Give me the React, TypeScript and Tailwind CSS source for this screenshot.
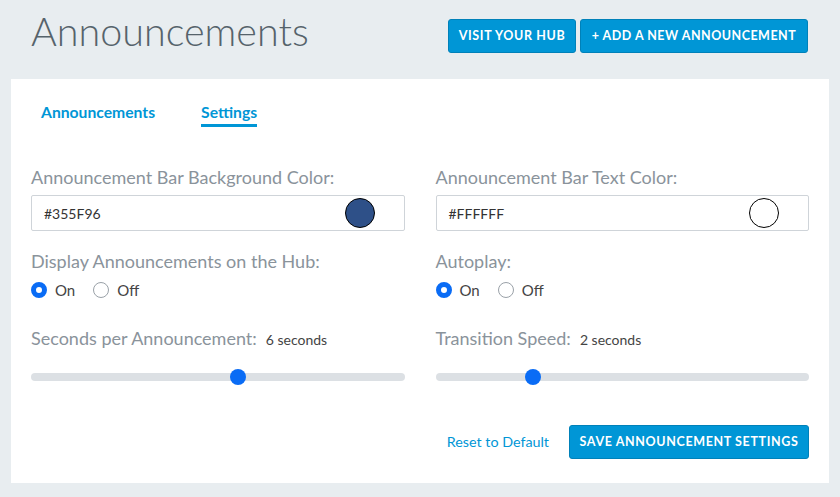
import React from "react"

const font = { fontFamily: "Lato, 'Noto Sans', sans-serif" }

const ColorField = ({ label, value, swatch }: { label: string; value: string; swatch: string }) => (
  <div>
    <div className="text-[18px] leading-[24px] text-[#8a939b]">{label}</div>
    <div className="mt-[6px] flex h-[36px] items-center justify-between rounded-[2px] border border-[#cfd4d9] bg-white pl-[12px] pr-[29px]">
      <span className="pt-[1px] text-[14px] text-[#333]">{value}</span>
      <span className="h-[30px] w-[30px] rounded-full border border-black" style={{ backgroundColor: swatch }} />
    </div>
  </div>
)

const RadioGroup = ({ label }: { label: string }) => (
  <div className="mt-[18px]">
    <div className="text-[18px] leading-[24px] text-[#8a939b]">{label}</div>
    <div className="mt-[7px] flex h-[20px] items-center text-[15px] text-[#444]">
      <span className="h-[16px] w-[16px] rounded-full border-[5px] border-[#0a6cf5] bg-white" />
      <span className="ml-[8px]">On</span>
      <span className="ml-[18px] h-[16px] w-[16px] rounded-full border border-[#9aa1a8] bg-white" />
      <span className="ml-[8px]">Off</span>
    </div>
  </div>
)

const Slider = ({ label, value, min, max }: { label: string; value: number; min: number; max: number }) => {
  const pct = (value - min) / (max - min)
  return (
    <div className="mt-[26px]">
      <div className="flex items-baseline">
        <span className="text-[18px] leading-[24px] text-[#8a939b]">{label}:</span>
        <span className="ml-[9px] text-[14px] text-[#444]">{value} seconds</span>
      </div>
      <div className="relative mt-[19px] h-[16px]">
        <div className="absolute left-0 right-0 top-[4px] h-[8px] rounded-full bg-[#dce0e4]" />
        <div
          className="absolute top-0 h-[16px] w-[16px] rounded-full bg-[#0a6cf5]"
          style={{ left: `calc((100% - 16px) * ${pct})` }}
        />
      </div>
    </div>
  )
}

export default function App() {
  return (
    <div className="min-h-[497px] bg-[#e8edf0] pb-[14px]" style={font}>
      {/* Header */}
      <div className="flex h-[79px] items-start justify-between pl-[31px] pr-[32px]">
        <h1 className="mt-[11px] text-[39.5px] font-light leading-none text-[#56636b]">Announcements</h1>
        <div className="mt-[19px] flex gap-[4px]">
          <button className="h-[34px] w-[128px] rounded-[3px] border border-[#0081b9] bg-[#0096d6] text-[12.5px] font-bold tracking-[0.05em] text-white">
            VISIT YOUR HUB
          </button>
          <button className="h-[34px] w-[228px] rounded-[3px] border border-[#0081b9] bg-[#0096d6] text-[12.5px] font-bold tracking-[0.04em] text-white">
            + ADD A NEW ANNOUNCEMENT
          </button>
        </div>
      </div>

      {/* Card */}
      <div className="mx-[11px] h-[404px] bg-white">
        <div className="flex gap-[46px] pl-[30px] pt-[23px]">
          <div className="pb-[5px] text-[15.7px] font-bold leading-[20px] text-[#0096d6]">Announcements</div>
          <div className="border-b-[3px] border-[#0096d6] pb-[2px] text-[15.7px] font-bold leading-[20px] text-[#0096d6]">
            Settings
          </div>
        </div>

        <div className="px-[20px] pt-[38px]">
          <div className="grid grid-cols-2 gap-x-[31px]">
            <div>
              <ColorField label="Announcement Bar Background Color:" value="#355F96" swatch="#2e5088" />
              <RadioGroup label="Display Announcements on the Hub:" />
              <Slider label="Seconds per Announcement" value={6} min={1} max={10} />
            </div>
            <div>
              <ColorField label="Announcement Bar Text Color:" value="#FFFFFF" swatch="#ffffff" />
              <RadioGroup label="Autoplay:" />
              <Slider label="Transition Speed" value={2} min={1} max={5} />
            </div>
          </div>

          <div className="mt-[40px] flex items-center justify-end gap-[20px]">
            <a href="#" className="text-[14.3px] text-[#0096d6]">Reset to Default</a>
            <button className="h-[34px] w-[240px] rounded-[3px] border border-[#0081b9] bg-[#0096d6] text-[12.5px] font-bold tracking-[0.05em] text-white">
              SAVE ANNOUNCEMENT SETTINGS
            </button>
          </div>
        </div>
      </div>
    </div>
  )
}
